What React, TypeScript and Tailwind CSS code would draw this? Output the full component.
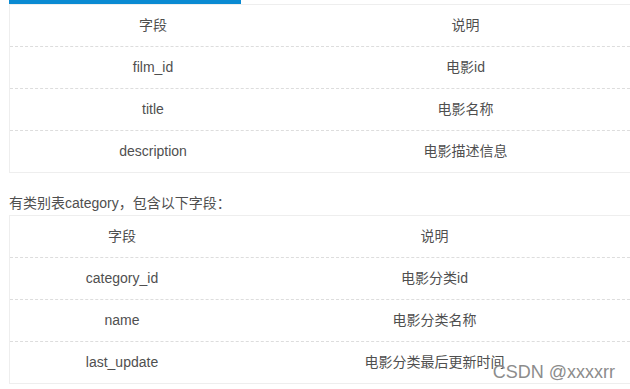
const FILM_ROWS = [
  ["字段", "说明"],
  ["film_id", "电影id"],
  ["title", "电影名称"],
  ["description", "电影描述信息"],
];

const CATEGORY_ROWS = [
  ["字段", "说明"],
  ["category_id", "电影分类id"],
  ["name", "电影分类名称"],
  ["last_update", "电影分类最后更新时间"],
];

function FieldTable({
  rows,
  firstCol,
}: {
  rows: string[][];
  firstCol: string;
}) {
  return (
    <div className="w-[626px] border-t border-l border-[#eeeeee]">
      {rows.map(([field, desc], i) => (
        <div
          key={field}
          className={`flex h-[42px] items-center ${
            i === rows.length - 1
              ? "border-b border-solid border-[#eeeeee]"
              : "border-b border-dashed border-[#dddddd]"
          }`}
        >
          <div className={`${firstCol} text-center`}>{field}</div>
          <div className="flex-1 text-center">{desc}</div>
        </div>
      ))}
    </div>
  );
}

export default function App() {
  return (
    <div
      className="relative h-[389px] w-[630px] overflow-hidden bg-white pl-[9px] text-[14px] text-[#4f4f4f]"
      style={{ fontFamily: '"Liberation Sans", "Noto Sans CJK SC", sans-serif' }}
    >
      <div className="h-[4px] w-[232px] bg-[#0a8ad2]" />
      <FieldTable rows={FILM_ROWS} firstCol="w-[286px]" />

      <p className="mt-[18px] h-[24px] leading-[24px]">
        有类别表category，包含以下字段：
      </p>
      <FieldTable rows={CATEGORY_ROWS} firstCol="w-[224px]" />

      <span className="absolute right-[15px] top-[359px] text-[18px] text-[#8c8c8c]">
        CSDN @xxxxrr
      </span>
    </div>
  );
}
